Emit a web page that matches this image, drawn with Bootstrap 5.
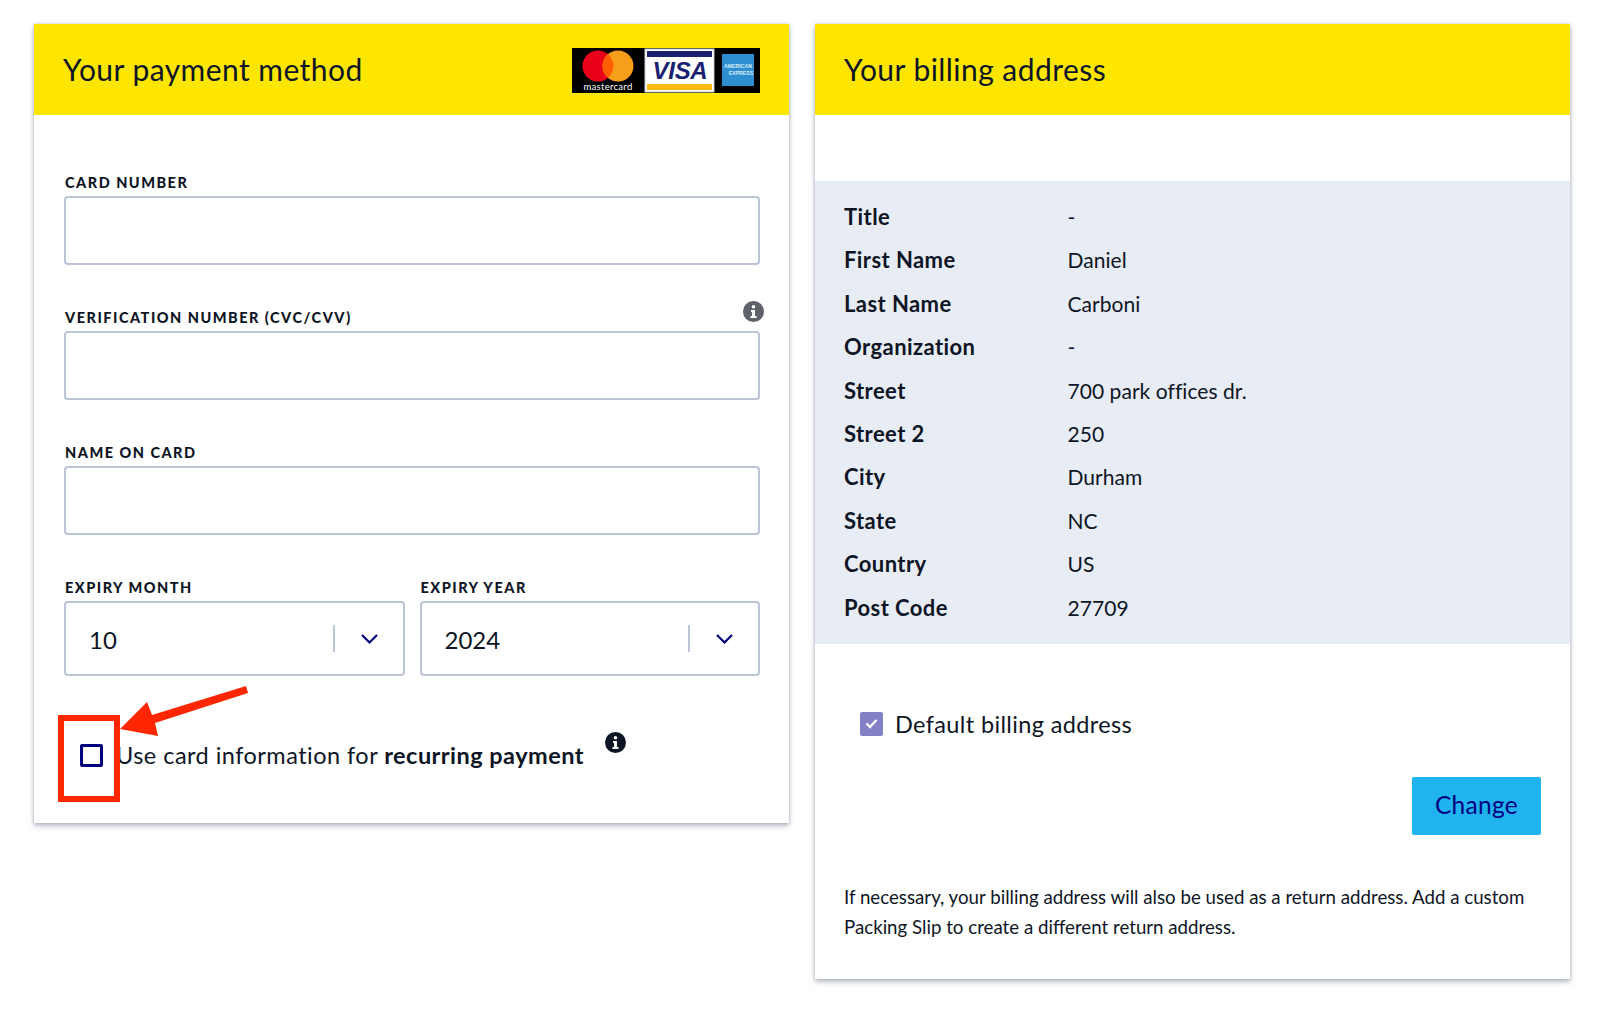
<!DOCTYPE html>
<html lang="en">
<head>
<meta charset="utf-8">
<title>Payment</title>
<link href="https://cdn.jsdelivr.net/npm/bootstrap@5.3.0/dist/css/bootstrap.min.css" rel="stylesheet">
<style>
html,body{min-height:100%;}
body{background:#fff;color:#0e1525;font-family:"Lato","Noto Sans",sans-serif;padding:24px 30px 0 34px;min-height:1015px;}
.pay-wrap{gap:26px;}
.pay-panel{width:755px;flex:none;background:#fff;box-shadow:0 0 3px rgba(120,130,150,.4),0 3px 5px rgba(120,130,150,.5);border-radius:0;}
.pay-head{background:#ffe600;height:91px;padding:0 29px;}
.pay-head h2{font-family:"Lato",sans-serif;font-size:30px;font-weight:400;letter-spacing:.45px;margin:-2px 0 0;color:#0e1525;}
.pay-body{padding:58px 29px 0 30px;position:relative;height:708px;}
.fld-label{display:block;font-size:14.500px;font-weight:900;letter-spacing:1.500px;line-height:20px;margin:0 0 3px;padding-left:1px;color:#0e1525;text-transform:uppercase;}
.fld{margin-bottom:43px;position:relative;}
.fld .form-control{height:69px;border:2px solid #bcc5d6;border-radius:4px;}
.fld-sel{margin-bottom:0;flex:1 1 0;}
.fld-sel .form-select{height:75px;border:2px solid #bcc5d6;border-radius:4px;font-size:24px;color:#0e1525;padding:2px 60px 0 23px;--bs-form-select-bg-img:none;background-image:url("data:image/svg+xml,%3Csvg xmlns='http://www.w3.org/2000/svg' width='68' height='28'%3E%3Cpath d='M1 0v27' stroke='%23bcc5d6' stroke-width='2'/%3E%3Cpath d='M29 10l7.500 7.500 7.500-7.500' fill='none' stroke='%2300007f' stroke-width='2.200'/%3E%3C/svg%3E");background-position:right 2px center;background-size:68px 28px;background-repeat:no-repeat;font-family:"Lato",sans-serif;}
.sel-row{gap:15px;}
.tip-ico{position:absolute;width:21px;height:21px;display:block;}
.tip-grey{right:-4px;top:-7px;}
.rec-row{margin-top:64px;height:30px;padding-left:16px;position:relative;font-size:23.500px;line-height:30px;letter-spacing:.47px;}
.rec-box{appearance:none;width:23px;height:23px;border:3px solid #00007f;border-radius:2px;background:#fff;flex:none;margin:0 13px 0 0;}
.rec-text{white-space:nowrap;position:relative;}
.rec-text b{font-weight:700;}
.tip-dark{left:541px;top:-8px;}
.red-box{position:absolute;left:-6px;top:-25px;width:62px;height:87px;border:6px solid #ff2600;pointer-events:none;}
.red-arrow{position:absolute;left:50px;top:-65px;width:140px;height:70px;pointer-events:none;}
.addr-gap{height:66px;}
.addr-panel{background:#e8ecf5;padding:14px 29px 14.600px;}
.addr-line{height:43.400px;line-height:43.400px;}
.addr-line dt{width:223.500px;flex:none;font-size:22px;font-weight:700;letter-spacing:.42px;margin:0;}
.addr-line dd{margin:0;font-size:21px;letter-spacing:.05px;}
.def-row{padding:68px 0 0 45px;height:93px;font-size:23.500px;line-height:24px;letter-spacing:.37px;}
.def-box{width:23px;height:24px;border-radius:2px;background:#8480c6;flex:none;margin-right:12px;display:flex;align-items:center;justify-content:center;}
.chg-row{padding:0 29px;margin-top:40px;}
.chg-btn{width:129px;height:58px;background:#1fb4f0;border:0;border-radius:2px;color:#00007f;font-size:24.500px;font-family:"Lato",sans-serif;letter-spacing:.3px;padding:0;}
.bill-note{padding:47.400px 29px 35.800px;margin:0;font-size:18.700px;line-height:30.600px;}
.logo-strip{display:block;width:188px;height:45px;margin-top:2px;}
</style>
</head>
<body>
<div class="d-flex align-items-start pay-wrap">
  <section class="pay-panel">
    <div class="pay-head d-flex align-items-center justify-content-between">
      <h2>Your payment method</h2>
      <svg class="logo-strip" viewBox="0 0 188 45" role="img" aria-label="Mastercard, Visa, American Express">
        <rect width="188" height="45" fill="#000"/>
        <circle cx="26" cy="18" r="15.500" fill="#eb001b"/>
        <circle cx="46" cy="18" r="15.500" fill="#f79e1b"/>
        <path d="M36 6.200a15.500 15.500 0 0 1 0 23.600a15.500 15.500 0 0 1 0-23.600z" fill="#ff5f00"/>
        <text x="36" y="42" text-anchor="middle" fill="#fff" font-family="Lato,sans-serif" font-size="9.500" letter-spacing=".3">mastercard</text>
        <rect x="73" y="1" width="69" height="43" fill="#fff" stroke="#c9ccd6"/>
        <rect x="75" y="3" width="65" height="6" fill="#1a1f71"/>
        <rect x="75" y="36" width="65" height="6" fill="#fdb913"/>
        <text x="108" y="31" text-anchor="middle" fill="#1a1f71" font-family="'Liberation Sans',sans-serif" font-size="24" font-weight="700" font-style="italic" letter-spacing="-.3">VISA</text>
        <rect x="150" y="6" width="32" height="32" fill="#2e8fd0"/>
        <text x="166" y="20" text-anchor="middle" fill="#d8ecfa" font-family="'Liberation Sans',sans-serif" font-size="5.200" font-weight="700">AMERICAN</text>
        <text x="169" y="27" text-anchor="middle" fill="#d8ecfa" font-family="'Liberation Sans',sans-serif" font-size="5.200" font-weight="700">EXPRESS</text>
      </svg>
    </div>
    <form class="pay-body">
      <div class="fld">
        <label class="fld-label" for="cn">Card number</label>
        <input id="cn" class="form-control" type="text">
      </div>
      <div class="fld">
        <label class="fld-label" for="cv">Verification number (CVC/CVV)</label>
        <svg class="tip-ico tip-grey" viewBox="0 0 21 21" aria-hidden="true"><circle cx="10.500" cy="10.500" r="10.500" fill="#5f6369"/><circle cx="10.500" cy="5.700" r="1.800" fill="#fff"/><path d="M8 9h4v6h1.500v2h-6v-2H9v-4H8z" fill="#fff"/></svg>
        <input id="cv" class="form-control" type="text">
      </div>
      <div class="fld">
        <label class="fld-label" for="nm">Name on card</label>
        <input id="nm" class="form-control" type="text">
      </div>
      <div class="d-flex sel-row">
        <div class="fld fld-sel">
          <label class="fld-label" for="em">Expiry month</label>
          <select id="em" class="form-select"><option>10</option></select>
        </div>
        <div class="fld fld-sel">
          <label class="fld-label" for="ey">Expiry year</label>
          <select id="ey" class="form-select"><option>2024</option></select>
        </div>
      </div>
      <div class="rec-row d-flex align-items-center">
        <input class="rec-box" type="checkbox" id="rc">
        <label class="rec-text" for="rc">Use card information for <b>recurring payment</b></label>
        <svg class="tip-ico tip-dark" viewBox="0 0 21 21" aria-hidden="true"><circle cx="10.500" cy="10.500" r="10.500" fill="#0e1525"/><circle cx="10.500" cy="5.700" r="1.800" fill="#fff"/><path d="M8 9h4v6h1.500v2h-6v-2H9v-4H8z" fill="#fff"/></svg>
        <span class="red-box"></span>
        <svg class="red-arrow" viewBox="0 0 140 70" aria-hidden="true"><path d="M132 11L134 18L41 48L44 61L6 54L33 27L38 40Z" fill="#ff2600"/></svg>
      </div>
    </form>
  </section>
  <section class="pay-panel">
    <div class="pay-head d-flex align-items-center"><h2>Your billing address</h2></div>
    <div class="addr-gap"></div>
    <dl class="addr-panel m-0">
      <div class="d-flex addr-line"><dt>Title</dt><dd>-</dd></div>
      <div class="d-flex addr-line"><dt>First Name</dt><dd>Daniel</dd></div>
      <div class="d-flex addr-line"><dt>Last Name</dt><dd>Carboni</dd></div>
      <div class="d-flex addr-line"><dt>Organization</dt><dd>-</dd></div>
      <div class="d-flex addr-line"><dt>Street</dt><dd>700 park offices dr.</dd></div>
      <div class="d-flex addr-line"><dt>Street 2</dt><dd>250</dd></div>
      <div class="d-flex addr-line"><dt>City</dt><dd>Durham</dd></div>
      <div class="d-flex addr-line"><dt>State</dt><dd>NC</dd></div>
      <div class="d-flex addr-line"><dt>Country</dt><dd>US</dd></div>
      <div class="d-flex addr-line"><dt>Post Code</dt><dd>27709</dd></div>
    </dl>
    <div class="def-row d-flex align-items-start">
      <span class="def-box"><svg width="13" height="11" viewBox="0 0 13 11" aria-hidden="true"><path d="M1.500 5.500l3.500 3.500 6.500-7" fill="none" stroke="#fff" stroke-width="2.400"/></svg></span>
      <span>Default billing address</span>
    </div>
    <div class="chg-row d-flex justify-content-end"><button type="button" class="btn chg-btn">Change</button></div>
    <p class="bill-note">If necessary, your billing address will also be used as a return address. Add a custom Packing Slip to create a different return address.</p>
  </section>
</div>
<script src="https://cdn.jsdelivr.net/npm/bootstrap@5.3.0/dist/js/bootstrap.bundle.min.js"></script>
</body>
</html>
